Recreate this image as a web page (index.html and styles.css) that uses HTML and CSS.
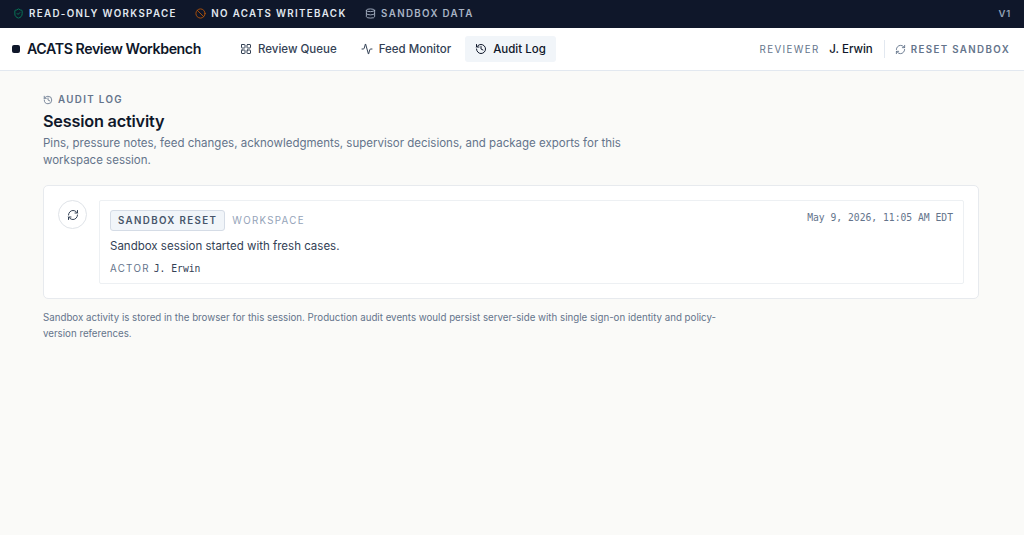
FILE: index.html
```html
<!DOCTYPE html>
<html lang="en">

<head>
    <meta charset="UTF-8">
    <meta name="viewport" content="width=device-width, initial-scale=1.0">
    <title>ACATS Review Workbench</title>
    <link rel="stylesheet" href="styles.css">
</head>

<body>
    <!-- Shared icons -->
    <svg class="sprite" aria-hidden="true">
        <symbol id="icon-history" viewBox="0 0 24 24">
            <path d="M3 12a9 9 0 1 0 9-9 9.75 9.75 0 0 0-6.74 2.74L3 8" />
            <path d="M3 3v5h5" />
            <path d="M12 7v5l4 2" />
        </symbol>
        <symbol id="icon-refresh" viewBox="0 0 24 24">
            <path d="M3 12a9 9 0 0 1 9-9 9.75 9.75 0 0 1 6.74 2.74L21 8" />
            <path d="M21 3v5h-5" />
            <path d="M21 12a9 9 0 0 1-9 9 9.75 9.75 0 0 1-6.74-2.74L3 16" />
            <path d="M8 16H3v5" />
        </symbol>
    </svg>

    <!-- Status strip -->
    <div class="status-bar">
        <span class="status">
            <svg class="icon green" viewBox="0 0 24 24">
                <path d="M20 13c0 5-3.5 7.5-7.66 8.95a1 1 0 0 1-.67-.01C7.5 20.5 4 18 4 13V6a1 1 0 0 1 1-1c2 0 4.5-1.2 6.24-2.72a1.17 1.17 0 0 1 1.52 0C14.51 3.81 17 5 19 5a1 1 0 0 1 1 1z" />
                <path d="m9 12 2 2 4-4" />
            </svg>
            <span>Read-only workspace</span>
        </span>
        <span class="status">
            <svg class="icon orange" viewBox="0 0 24 24">
                <circle cx="12" cy="12" r="10" />
                <path d="m4.9 4.9 14.2 14.2" />
            </svg>
            <span>No ACATS writeback</span>
        </span>
        <span class="status status-muted">
            <svg class="icon" viewBox="0 0 24 24">
                <ellipse cx="12" cy="5" rx="9" ry="3" />
                <path d="M3 5v14a9 3 0 0 0 18 0V5" />
                <path d="M3 12a9 3 0 0 0 18 0" />
            </svg>
            <span>Sandbox data</span>
        </span>
        <span class="version">v1</span>
    </div>

    <!-- Main header -->
    <header class="header">
        <div class="brand"><span class="brand-mark"></span>ACATS Review Workbench</div>
        <nav class="nav">
            <a href="#">
                <svg class="icon" viewBox="0 0 24 24">
                    <rect x="3" y="3" width="7" height="7" rx="1" />
                    <rect x="14" y="3" width="7" height="7" rx="1" />
                    <rect x="14" y="14" width="7" height="7" rx="1" />
                    <rect x="3" y="14" width="7" height="7" rx="1" />
                </svg>
                Review Queue
            </a>
            <a href="#">
                <svg class="icon" viewBox="0 0 24 24">
                    <path d="M22 12h-2.48a2 2 0 0 0-1.93 1.46l-2.35 8.36a.25.25 0 0 1-.48 0L9.24 2.18a.25.25 0 0 0-.48 0l-2.35 8.36A2 2 0 0 1 4.49 12H2" />
                </svg>
                Feed Monitor
            </a>
            <a href="#" class="active">
                <svg class="icon"><use href="#icon-history" /></svg>
                Audit Log
            </a>
        </nav>
        <div class="session">
            <span class="reviewer-label">Reviewer</span>
            <span class="reviewer">J. Erwin</span>
            <button type="button" class="reset">
                <svg class="icon"><use href="#icon-refresh" /></svg>
                Reset sandbox
            </button>
        </div>
    </header>

    <main class="page">
        <div class="eyebrow">
            <svg class="icon"><use href="#icon-history" /></svg>
            Audit log
        </div>
        <h1>Session activity</h1>
        <p class="intro">Pins, pressure notes, feed changes, acknowledgments, supervisor decisions, and package exports for this workspace session.</p>

        <section class="card">
            <div class="event-icon">
                <svg class="icon"><use href="#icon-refresh" /></svg>
            </div>
            <article class="event">
                <div class="event-head">
                    <span class="badge">Sandbox reset</span>
                    <span class="scope">Workspace</span>
                    <time class="time">May 9, 2026, 11:05 AM EDT</time>
                </div>
                <p class="message">Sandbox session started with fresh cases.</p>
                <div class="actor"><span class="actor-label">Actor</span><span class="actor-name">J. Erwin</span></div>
            </article>
        </section>

        <p class="footnote">Sandbox activity is stored in the browser for this session. Production audit events would persist server-side with single sign-on identity and policy-version references.</p>
    </main>
</body>

</html>
```
FILE: styles.css
```css
* {
    box-sizing: border-box;
}

body {
    margin: 0;
    min-height: 100vh;
    font-family: Inter, "Liberation Sans", sans-serif;
    font-size: 11.5px;
    background-color: #fafaf8;
    color: #0f172a;
}

.sprite {
    display: none;
}

.icon {
    width: 11px;
    height: 11px;
    flex-shrink: 0;
    fill: none;
    stroke: currentColor;
    stroke-width: 2;
    stroke-linecap: round;
    stroke-linejoin: round;
}

/* Status strip */
.status-bar {
    display: flex;
    align-items: center;
    gap: 18.5px;
    height: 28px;
    padding: 0 13px 1px;
    background-color: #0f172a;
    color: #e2e8f0;
    font-size: 9.75px;
    font-weight: 600;
    letter-spacing: 1.35px;
    text-transform: uppercase;
}

.status {
    display: flex;
    align-items: center;
    gap: 5px;
}

.status-muted {
    color: #a9b4c5;
}

.green {
    color: #087f5b;
}

.orange {
    color: #b45309;
}

.version {
    margin-left: auto;
    color: #94a3b8;
    font-size: 9.5px;
    letter-spacing: 0.8px;
}

/* Main header */
.header {
    display: flex;
    align-items: center;
    height: 43px;
    padding: 0 14px 0 12px;
    background-color: #fff;
    border-bottom: 1px solid #e2e8f0;
}

.brand {
    display: flex;
    align-items: center;
    gap: 7px;
    width: 218px;
    padding-bottom: 1px;
    font-size: 14.2px;
    font-weight: 600;
    letter-spacing: -0.42px;
}

.brand-mark {
    width: 8px;
    height: 8px;
    border-radius: 2px;
    background-color: #0f172a;
}

.nav {
    display: flex;
    gap: 4px;
}

.nav a {
    display: flex;
    align-items: center;
    gap: 6px;
    height: 26px;
    padding: 0 10px;
    border-radius: 3px;
    color: #334155;
    font-size: 11.5px;
    font-weight: 500;
    text-decoration: none;
}

.nav .icon {
    width: 12px;
    height: 12px;
}

.nav a.active {
    background-color: #f1f5f9;
    color: #0f172a;
}

.session {
    display: flex;
    align-items: center;
    margin-left: auto;
}

.reviewer-label {
    color: #64748b;
    font-size: 9.75px;
    letter-spacing: 1.4px;
    text-transform: uppercase;
}

.reviewer {
    margin-left: 9.5px;
    font-weight: 500;
}

.reset {
    display: flex;
    align-items: center;
    gap: 5px;
    height: 18px;
    margin-left: 11px;
    padding: 0 0 0 10px;
    border: none;
    border-left: 1px solid #e2e8f0;
    background: none;
    color: #64748b;
    font: 600 9.75px Inter, "Liberation Sans", sans-serif;
    letter-spacing: 1.35px;
    text-transform: uppercase;
}

/* Page content */
.page {
    padding: 22px 45px 0 43px;
}

.eyebrow {
    display: flex;
    align-items: center;
    gap: 5px;
    height: 13px;
    color: #64748b;
    font-size: 9.75px;
    font-weight: 600;
    letter-spacing: 1.35px;
    text-transform: uppercase;
}

.eyebrow .icon {
    width: 10px;
    height: 10px;
}

h1 {
    margin: 4px 0 3px;
    font-size: 16.25px;
    font-weight: 600;
    line-height: 22px;
    letter-spacing: -0.2px;
}

.intro {
    max-width: 600px;
    margin: 0;
    color: #64748b;
    line-height: 16.5px;
}

.card {
    display: flex;
    gap: 12px;
    margin-top: 17px;
    padding: 14px;
    border: 1px solid #e7eaee;
    border-radius: 5px;
    background-color: #fff;
}

.event-icon {
    display: flex;
    align-items: center;
    justify-content: center;
    width: 29px;
    height: 29px;
    border: 1px solid #dfe3e8;
    border-radius: 50%;
    color: #334155;
}

.event-icon .icon {
    width: 12px;
    height: 12px;
}

.event {
    flex: 1;
    height: 84px;
    padding: 9px 10px;
    border: 1px solid #edf0f3;
    border-radius: 2px;
}

.event-head {
    display: flex;
    align-items: center;
    height: 20px;
}

.badge {
    height: 21px;
    padding: 0 7px;
    border: 1px solid #d5dce6;
    border-radius: 3px;
    background-color: #f1f5f9;
    color: #475569;
    font-size: 9.75px;
    font-weight: 600;
    line-height: 19px;
    letter-spacing: 1.35px;
    text-transform: uppercase;
}

.scope {
    margin-left: 7px;
    color: #94a3b8;
    font-size: 9.75px;
    letter-spacing: 1.3px;
    text-transform: uppercase;
}

.time {
    align-self: flex-start;
    margin-left: auto;
    color: #64748b;
    font-family: "DejaVu Sans Mono", "Liberation Mono", monospace;
    font-size: 9.7px;
    line-height: 15px;
}

.message {
    margin: 8px 0 0;
    color: #334155;
    line-height: 16px;
}

.actor {
    display: flex;
    gap: 4px;
    margin-top: 7px;
    font-size: 9.75px;
    line-height: 15px;
}

.actor-label {
    color: #64748b;
    letter-spacing: 1.3px;
    text-transform: uppercase;
}

.actor-name {
    color: #334155;
    font-family: "DejaVu Sans Mono", "Liberation Mono", monospace;
    font-size: 9.7px;
}

.footnote {
    max-width: 685px;
    margin: 11px 0 0;
    color: #64748b;
    font-size: 9.72px;
    line-height: 16px;
}
```
